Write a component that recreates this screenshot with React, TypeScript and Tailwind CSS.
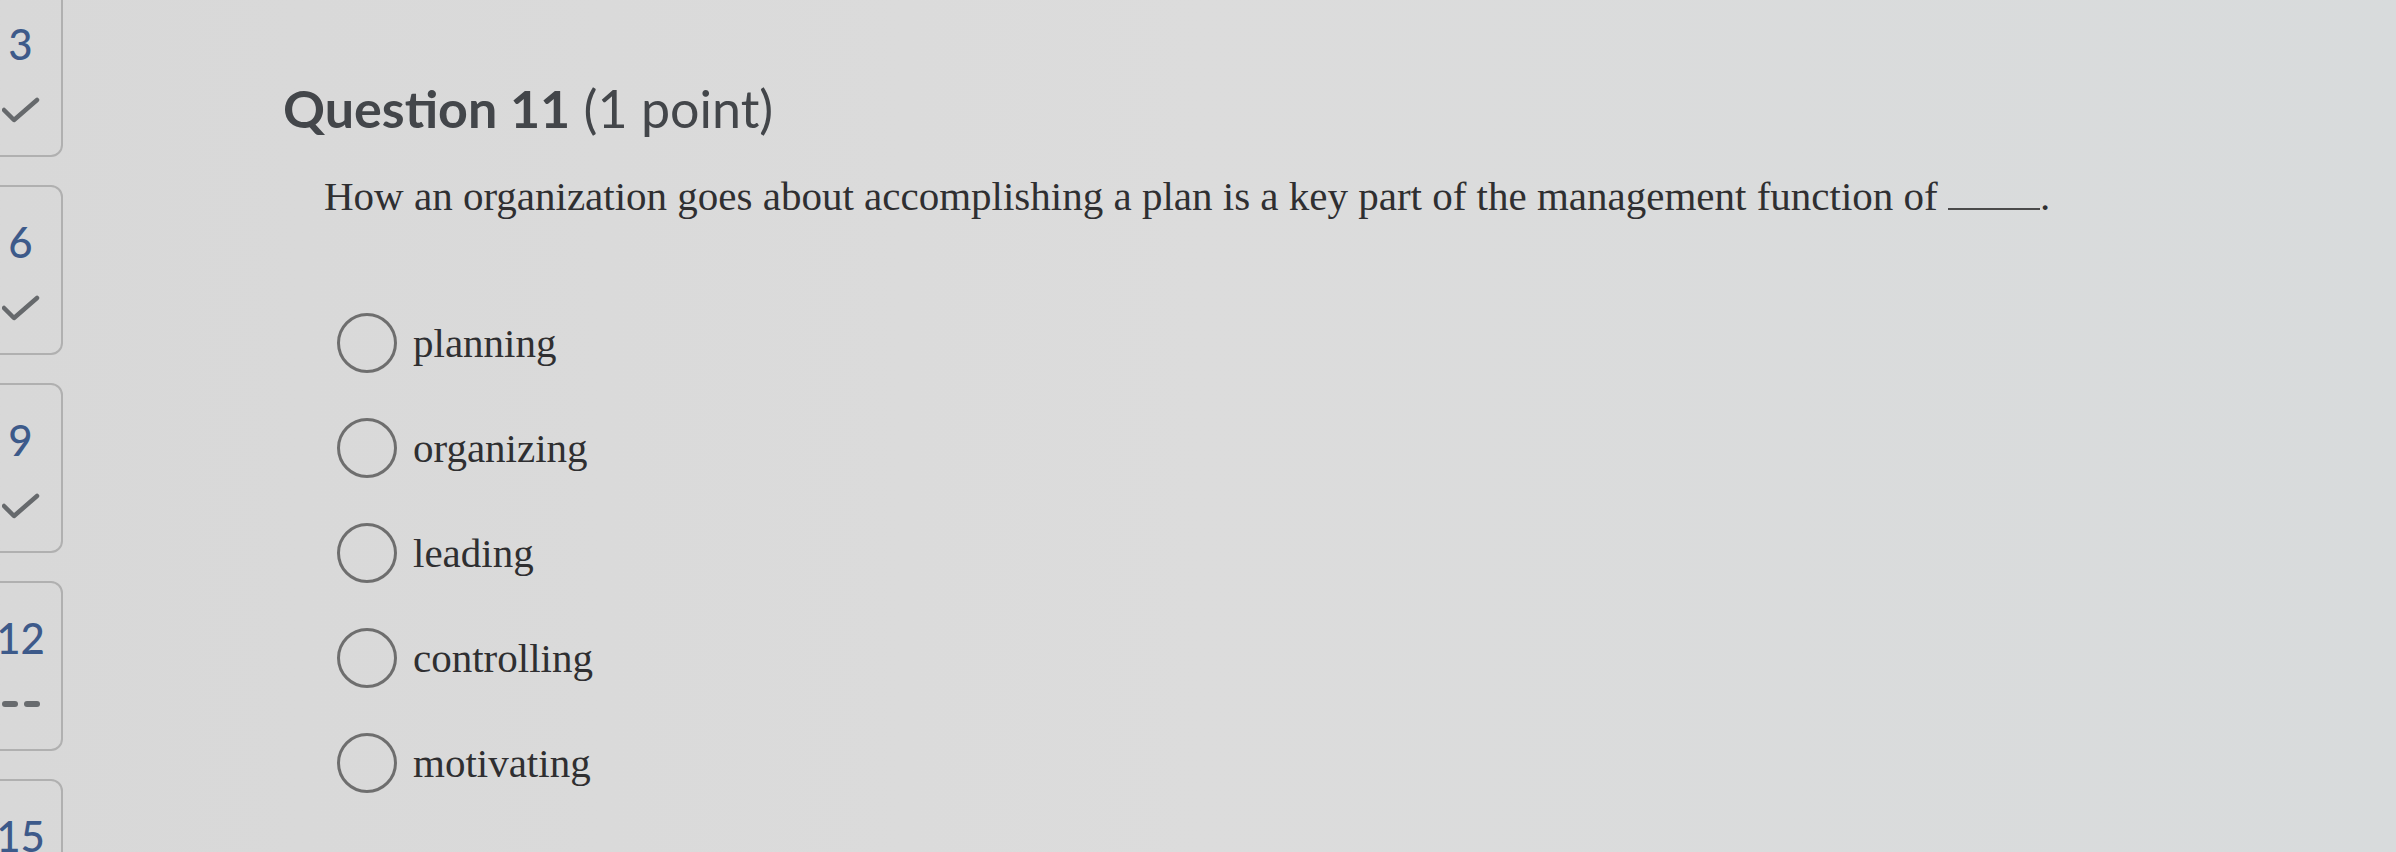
import React from 'react';

const questions = [
  { num: '3', status: 'done' },
  { num: '6', status: 'done' },
  { num: '9', status: 'done' },
  { num: '12', status: 'open' },
  { num: '15', status: 'done' }
];

const choices = ['planning', 'organizing', 'leading', 'controlling', 'motivating'];

function Check() {
  return (
    <svg width="38" height="26" viewBox="0 0 38 26" fill="none">
      <path d="M2 13 L12 23 L35 3" stroke="#66696c" strokeWidth="4.5" strokeLinecap="round" strokeLinejoin="round" />
    </svg>
  );
}

function Dashes() {
  return (
    <div className="flex h-[26px] items-center gap-[6px]">
      <span className="h-[6px] w-[16px] rounded-sm bg-[#686b6e]" />
      <span className="h-[6px] w-[16px] rounded-sm bg-[#686b6e]" />
    </div>
  );
}

export default function App() {
  return (
    <div className="flex h-[852px] w-[2396px] overflow-hidden bg-gradient-to-r from-[#d8d8d8] via-[#dcdcdc] to-[#d8dbdc]">
      <div className="-ml-[22px] -mt-[13px] flex w-[85px] shrink-0 flex-col gap-[28px]">
        {questions.map((q) => (
          <div key={q.num} className="flex h-[170px] shrink-0 flex-col items-center rounded-[12px] border-2 border-[#b0b0b0] pt-[34px]">
            <div className="text-[42px] font-medium leading-none text-[#3d5a8a]" style={{ fontFamily: 'Lato, sans-serif' }}>
              {q.num}
            </div>
            <div className="mt-[32px]">{q.status === 'done' ? <Check /> : <Dashes />}</div>
          </div>
        ))}
      </div>

      <div className="ml-[220px] flex flex-col pt-[82px]">
        <h1 className="text-[52px] leading-none text-[#43464a]" style={{ fontFamily: 'Lato, sans-serif' }}>
          <span className="font-bold">Question 11</span> <span className="font-normal">(1 point)</span>
        </h1>

        <p className="ml-[41px] mt-[42px] whitespace-nowrap text-[41px] leading-none text-[#2f2f31]" style={{ fontFamily: '"Liberation Serif", serif' }}>
          How an organization goes about accomplishing a plan is a key part of the management function of{' '}
          <span className="inline-block w-[92px] border-b-2 border-[#4a4a4a] align-baseline" />.
        </p>

        <div className="ml-[54px] mt-[96px] flex flex-col gap-[45px]">
          {choices.map((c) => (
            <label key={c} className="flex items-center gap-[16px]">
              <span className="h-[60px] w-[60px] shrink-0 rounded-full border-[3px] border-[#6e6e6e]" />
              <span className="text-[41px] leading-none text-[#2f2f31]" style={{ fontFamily: '"Liberation Serif", serif' }}>
                {c}
              </span>
            </label>
          ))}
        </div>
      </div>
    </div>
  );
}
